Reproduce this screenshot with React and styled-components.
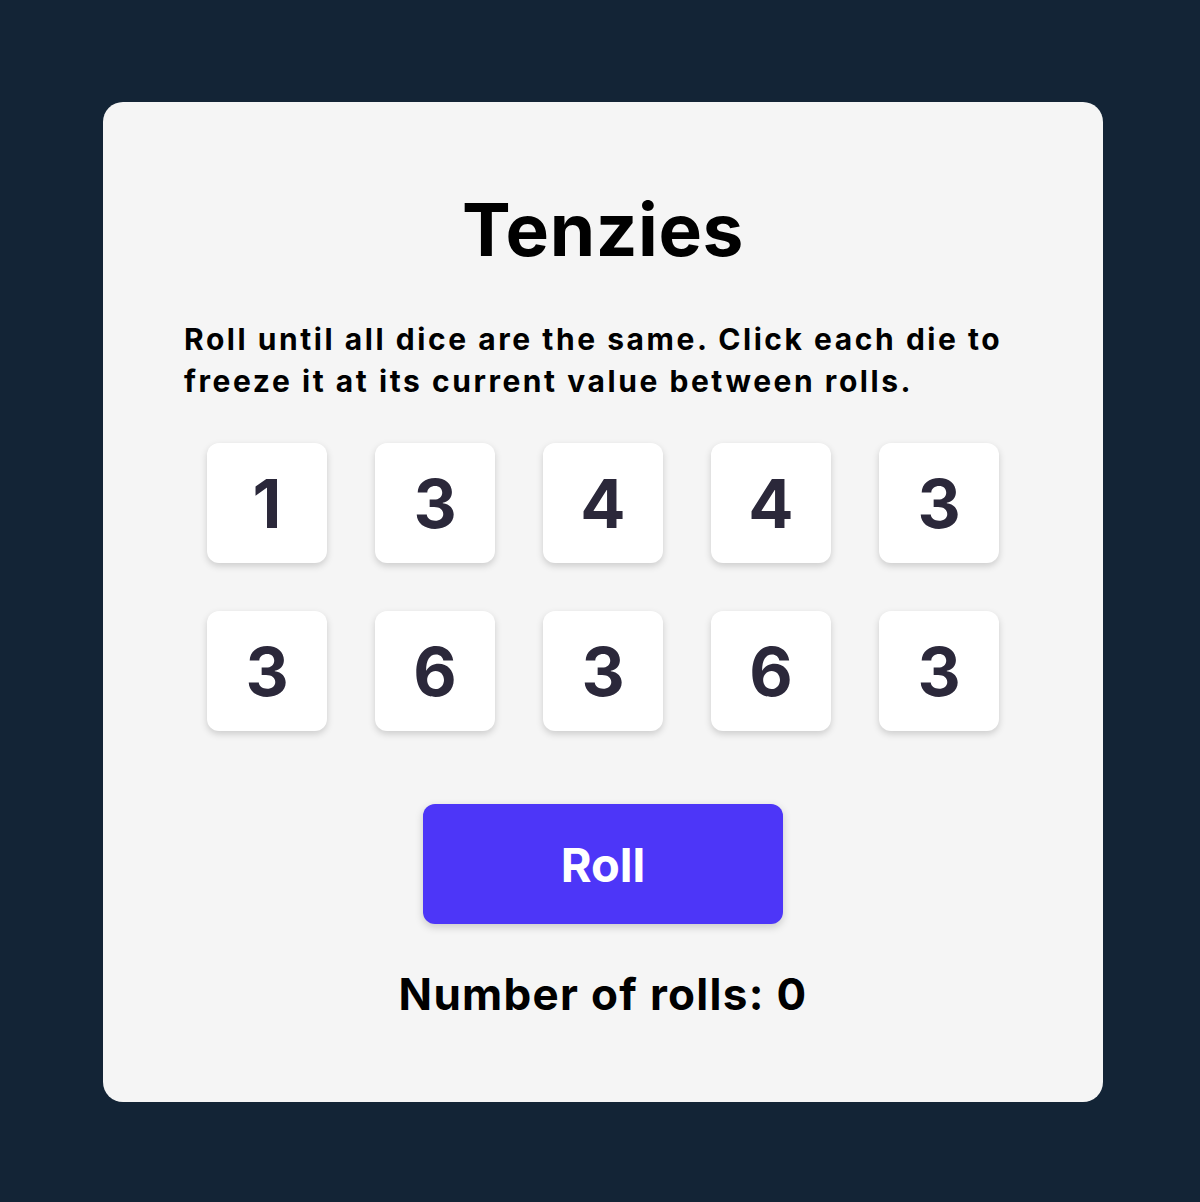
import React from "react";
import styled, { createGlobalStyle } from "styled-components";

const Global = createGlobalStyle`
  html, body { margin: 0; padding: 0; background: #132436; }
  body { font-family: Inter, "Noto Sans", sans-serif; }
`;

const Page = styled.div`
  min-height: 1202px;
  box-sizing: border-box;
  padding: 102px 97px 100px 103px;
  background: #132436;
`;

const Card = styled.main`
  width: 1000px;
  height: 1000px;
  box-sizing: border-box;
  background: #f5f5f5;
  border-radius: 20px;
  display: flex;
  flex-direction: column;
  align-items: center;
  padding-top: 91px;
`;

const Title = styled.h1`
  margin: 0;
  font-size: 73px;
  line-height: 1;
  font-weight: 700;
  color: #000;
  letter-spacing: 0.6px;
`;

const Instructions = styled.p`
  margin: 52px 0 0;
  align-self: stretch;
  padding: 0 60px 0 81px;
  font-size: 30px;
  line-height: 42px;
  font-weight: 700;
  color: #000;
  text-align: left;
  letter-spacing: 2.55px;
  white-space: nowrap;
`;

const DiceGrid = styled.div`
  margin-top: 41px;
  display: grid;
  grid-template-columns: repeat(5, 120px);
  grid-auto-rows: 120px;
  gap: 48px;
`;

const Die = styled.button`
  border: none;
  border-radius: 12px;
  background: ${(p) => (p.$held ? "#59e391" : "#ffffff")};
  box-shadow: 0 3px 7px rgba(0, 0, 0, 0.17);
  display: flex;
  align-items: center;
  justify-content: center;
  font-family: Inter, "Noto Sans", sans-serif;
  font-size: 67px;
  font-weight: 700;
  color: #2b283a;
  padding: 0;
  cursor: pointer;
`;

const RollButton = styled.button`
  margin-top: 73px;
  width: 360px;
  height: 120px;
  border: none;
  border-radius: 12px;
  background: #4d36f8;
  color: #fff;
  font-family: Inter, "Noto Sans", sans-serif;
  font-size: 47px;
  font-weight: 700;
  box-shadow: 0 3px 8px rgba(0, 0, 0, 0.18);
  cursor: pointer;
`;

const Count = styled.p`
  margin: 48px 0 0;
  font-size: 44px;
  line-height: 1;
  font-weight: 700;
  color: #000;
  letter-spacing: 1.3px;
`;

const dice = [1, 3, 4, 4, 3, 3, 6, 3, 6, 3];

export default function App() {
  return (
    <>
      <Global />
      <Page>
        <Card>
          <Title>Tenzies</Title>
          <Instructions>
            Roll until all dice are the same. Click each die to
            <br />
            freeze it at its current value between rolls.
          </Instructions>
          <DiceGrid>
            {dice.map((v, i) => (
              <Die key={i}>{v}</Die>
            ))}
          </DiceGrid>
          <RollButton>Roll</RollButton>
          <Count>Number of rolls: 0</Count>
        </Card>
      </Page>
    </>
  );
}
